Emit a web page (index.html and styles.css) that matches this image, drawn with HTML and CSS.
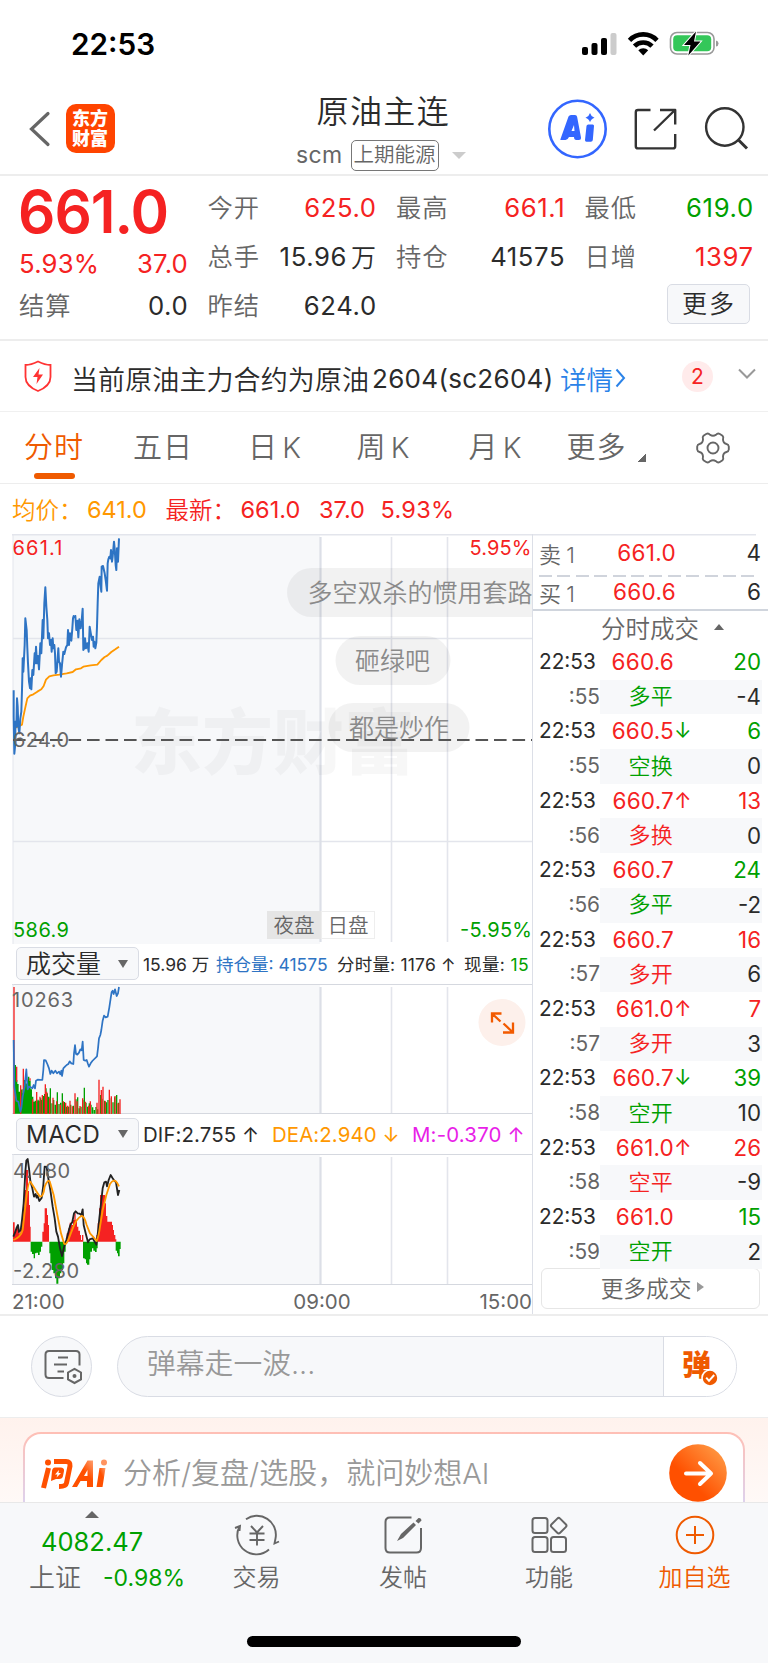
FILE: index.html
```
<!DOCTYPE html>
<html lang="zh-CN">
<head>
<meta charset="utf-8">
<title>原油主连</title>
<link rel="stylesheet" href="styles.css">
</head>
<body>
<div class="status">
  <span class="clock">22:53</span>
  <svg class="status-icons" width="140" height="26" viewBox="0 0 140 26">
    <rect x="2" y="16" width="6" height="8" rx="2"/><rect x="11.500" y="12" width="6" height="12" rx="2"/><rect x="21" y="7" width="6" height="17" rx="2"/><rect x="30.500" y="2" width="6" height="22" rx="2" fill="#ccc"/>
    <g fill="none" stroke="#000" stroke-width="4.600"><path d="M49.500 9.300a19 19 0 0 1 27.500 0"/><path d="M54.500 15.200a12.200 12.200 0 0 1 17.500 0"/></g>
    <path d="M58.300 19.300a7 7 0 0 1 9.900 0L63.250 24.500z"/>
    <rect x="90.500" y="1.500" width="43.500" height="21.500" rx="6.500" fill="none" stroke="#999" stroke-width="1.600"/>
    <rect x="93.200" y="4.200" width="38" height="16" rx="4" fill="#34c759"/><path d="M136 9.500q2.500.500 2.500 3t-2.500 3z" fill="#999"/>
    <path d="M116 .500L104 14h6.500l-2.200 10.500L120.500 10.500H114z" stroke="#fff" stroke-width="2" paint-order="stroke"/>
  </svg>
</div>
<header class="topbar">
  <svg class="back" width="24" height="40" viewBox="0 0 24 40"><path d="M20 4.500L3.500 20 20 35.500" fill="none" stroke="#666" stroke-width="3.200" stroke-linecap="round"/></svg>
  <div class="brand"><span>东方</span><span>财富</span></div>
  <div class="title">
    <h1>原油主连</h1>
    <div class="sub"><span class="scm">scm</span><span class="exch">上期能源</span><i class="tri-down"></i></div>
  </div>
  <svg class="tools" width="212" height="60" viewBox="546 99 212 60" fill="none" stroke="#333" stroke-width="2.400">
    <circle cx="577.500" cy="129" r="28.200" stroke="#3366ff" stroke-width="2.600"/>
    <path d="M560.500 139l8-22.500q.800-1.500 2.500-1.500h4q1.800 0 2.100 1.800l3.900 20.700q.200 2.500-2.200 2.500h-2.500q-2.300 0-2.300-3h-5q-1.300 3-3.500 3h-3.500q-2.500 0-1.500-1zM571.500 131h3l-.500-6z" fill="#3366ff" fill-rule="evenodd" stroke="none"/>
    <path d="M586.500 126q.200-1.500 1.700-1.500h4.500q1.500 0 1.300 1.500l-1.200 14q-.200 1.800-2 1.800h-4.300q-1.700 0-1.500-1.800z" fill="#3366ff" stroke="none"/>
    <path d="M590 113q1 3.600 4.500 4.800-3.500 1-4.500 4.500-1-3.500-4.500-4.500 3.500-1.200 4.500-4.800z" fill="#3366ff" stroke="none"/>
    <path d="M650.500 110H638q-2.200 0-2.200 2.200v34q0 2.200 2.200 2.200h35q2.200 0 2.200-2.200V134M660 110h15.200v14.500M675 110l-21 20.500" stroke-linejoin="round"/>
    <circle cx="724.800" cy="127" r="18.700"/><path d="M738 139.500l9 9" stroke-width="3"/>
  </svg>
</header>
<section class="quote">
  <div class="price-box"><div class="last">661.0</div><div class="pair red"><span>5.93%</span><span>37.0</span></div><div class="pair third"><label>结算</label><b>0.0</b></div></div>
  <div class="col"><div class="pair"><label>今开</label><b class="red">625.0</b></div><div class="pair"><label>总手</label><b>15.96<small>万</small></b></div><div class="pair"><label>昨结</label><b>624.0</b></div></div>
  <div class="col"><div class="pair"><label>最高</label><b class="red">661.1</b></div><div class="pair"><label>持仓</label><b>41575</b></div></div>
  <div class="col"><div class="pair"><label>最低</label><b class="green">619.0</b></div><div class="pair"><label>日增</label><b class="red">1397</b></div><div class="more-wrap"><span class="more">更多</span></div></div>
</section>
<section class="notice">
  <svg width="28" height="32" viewBox="0 0 28 32"><path d="M14 1.500Q21 5 26.500 5V17q0 9-12.500 14Q1.500 26 1.500 17V5Q7 5 14 1.500z" fill="none" stroke="#f33" stroke-width="1.800"/><path d="M15.500 8L9 17h4.500l-1 7L19 14.500h-4.500z" fill="#f33"/></svg>
  <p><span class="n1">当前原油主力合约为原油</span><span class="n2">2604(sc2604)</span><span class="n3">详情</span></p>
  <svg class="n-arrow" width="11" height="20" viewBox="0 0 11 20"><path d="M1.500 1.500L9 10 1.500 18.500" fill="none" stroke="#2b83e8" stroke-width="2"/></svg>
  <span class="count">2</span>
  <svg class="fold" width="18" height="12" viewBox="0 0 18 12"><path d="M1 1.500l8 8 8-8" fill="none" stroke="#999" stroke-width="2"/></svg>
</section>
<nav class="tabs">
  <span class="tab t1 active">分时</span><span class="tab t2">五日</span><span class="tab t3">日 K</span><span class="tab t4">周 K</span><span class="tab t5">月 K</span><span class="tab t6">更多</span><i class="corner"></i>
  <svg width="36" height="36" viewBox="-18 -18 36 36" fill="none" stroke="#666" stroke-width="1.900"><path d="M-6.500-14.200Q-4.500-15-3-13.200Q0-11.200 3-13.200Q4.500-15 6.500-14.200L9.500-12.200Q10.800-11 10-8.800Q10-5 13.500-4Q15.600-3.500 15.800-1.500V1.500Q15.600 3.500 13.500 4Q10 5 10 8.800Q10.800 11 9.500 12.200L6.500 14.200Q4.500 15 3 13.200Q0 11.200-3 13.200Q-4.500 15-6.500 14.200L-9.500 12.200Q-10.800 11-10 8.800Q-10 5-13.500 4Q-15.600 3.500-15.800 1.500V-1.500Q-15.600-3.500-13.500-4Q-10-5-10-8.800Q-10.800-11-9.500-12.200Z"/><circle r="5.500"/></svg>
</nav>
<div class="legend"><span class="orange lg1">均价：</span><span class="orange lg2">641.0</span><span class="red lg3">最新：</span><span class="red lg4">661.0</span><span class="red lg5">37.0</span><span class="red lg6">5.93%</span></div>
<main class="market">
  <div class="charts">
    <svg class="chart" width="521" height="410" viewBox="0 0 521 410">
      <rect x="1" y="1" width="307" height="409" fill="#f7f8fa"/>
      <g fill="none" stroke="#e3e5ec"><path d="M0 .750H521" stroke-width="1.500"/><path d="M1 0V410" /><path d="M1 104.500H521M1 307.500H521" stroke-width="1.600"/><path d="M379.500 3V408M435.500 3V408" stroke-width="1.600"/><path d="M308.500 3V408" stroke-width="2.200" stroke="#dcdfe7"/></g>
      <text class="watermark" x="119" y="234" textLength="284">东方财富</text>
      <g fill="rgb(0 0 0 / 5%)"><rect x="275" y="34" width="290" height="49" rx="24.500"/><rect x="323.500" y="102" width="115" height="49" rx="24.500"/><rect x="316.500" y="169" width="141" height="49" rx="24.500"/></g>
      <g class="bullet"><text x="295.500" y="68" textLength="225">多空双杀的惯用套路</text><text x="343" y="136" textLength="75">砸绿吧</text><text x="337" y="203" textLength="100">都是炒作</text></g>
      <g transform="translate(-12 -4) scale(.33333)" fill="none" stroke-linejoin="round">
        <path d="M41 595L54 590 66 584 70 560 76 532 82 505 90 497 100 493 112 485 124 478 131 468 138 449 148 439 160 436 178 434 200 430 218 426 228 418 243 415 250 410 272 406 292 404 304 390 314 381 322 377 334 366 346 358 357 350" stroke="#ff9800" stroke-width="5.500"/>
        <path d="M41 481L41 560 43 671 46 640 46 575 49 590 51 505 53 530 55 590 58 610 61 565 64 545 66 480 67 440 68 385 70 425 72 385 74 345 76 265 80 300 82 355 84 400 87 455 90 474 92 445 94 478 97 420 100 435 104 370 106 400 108 350 111 400 114 378 117 418 121 340 124 370 128 270 130 325 133 220 136 172 139 230 142 270 144 325 147 310 150 345 153 330 155 365 158 325 160 355 163 345 165 370 167 430 170 425 173 385 175 355 177 395 180 400 183 440 186 405 190 365 193 372 198 352 202 345 204 300 207 345 210 310 214 332 217 295 219 265 221 258 224 262 226 258 229 300 232 272 235 322 238 268 242 295 245 272 248 236 250 360 253 355 255 325 258 355 262 340 266 365 269 290 272 308 276 330 279 320 281 350 283 335 286 355 289 338 291 290 293 220 295 160 299 140 301 162 304 185 305 110 309 108 314 130 317 150 321 182 323 100 325 88 328 80 331 85 333 60 336 95 338 80 342 35 344 55 347 105 349 120 351 55 354 95 357 25" stroke="#2e74c4" stroke-width="6"/>
      </g>
      <path d="M1 206H521" stroke="#555" stroke-width="2" stroke-dasharray="12.600 5.900"/>
      <g class="ax"><text class="r" x="0.500" y="21" textLength="50">661.1</text><text class="r" x="457.500" y="21" textLength="62">5.95%</text><text class="k" x="1" y="212.500" textLength="56">624.0</text><text class="g" x="1" y="403" textLength="56">586.9</text><text class="g" x="448" y="403" textLength="72">-5.95%</text></g>
      <rect x="255" y="377" width="54" height="28" fill="#e5e5e5"/><rect x="309.500" y="377.500" width="53" height="27" fill="#fff" stroke="#eee"/>
      <g class="session"><text x="261.500" y="399">夜盘</text><text x="315.500" y="399">日盘</text></g>
    </svg>
    <div class="ind"><span class="drop d1">成交量<i></i></span><span class="i1">15.96 万</span><span class="i2 blue">持仓量: 41575</span><span class="i3">分时量: 1176 ↑</span><span class="i4">现量: <em class="green">15</em></span></div>
    <svg class="chart" width="521" height="130" viewBox="0 0 521 130">
      <rect x="1" width="307" y="1" height="129" fill="#f7f8fa"/>
      <g fill="none" stroke="#e3e5ec"><path d="M0 .500H521M0 129.500H521" stroke="#d5d8df"/><path d="M1 0V130"/><path d="M379.500 3V129M435.500 3V129" stroke-width="1.600"/><path d="M308.500 3V129" stroke-width="2.200" stroke="#dcdfe7"/></g>
      <g transform="translate(-12 -54) scale(.33333)" fill="none" stroke-width="4">
        <path stroke="#00a000" d="M46 551V405M50 551V450M54 551V462M58 551V485M62 551V480M66 551V478M70 551V490M74 551V450M78 551V460M82 551V462M86 551V440M90 551V452M94 551V478M98 551V500M102 551V515M106 551V512M110 551V514M114 551V509M118 551V512M122 551V505M126 551V510M130 551V498M134 551V492M138 551V475M142 551V490M146 551V500M151 551V475M156 551V520M161 551V510M166 551V524M172 551V487M177 551V522M182 551V518M187 551V490M193 551V516M200 551V530M206 551V530M212 551V524M220 551V527M228 551V508M233 551V502M238 551V535M243 551V530M248 551V510M253 551V473M258 551V518M263 551V530M268 551V520M273 551V524M278 551V532M283 551V540M288 551V531M293 551V538M302 551V495M306 551V506M314 551V512M319 551V517M324 551V510M334 551V505M339 551V517M344 551V502M350 551V495M356 551V518"/>
        <path stroke="#f52222" d="M42 553V171M50 455V410M62 553V466M70 490V416M90 452V445M98 553V508M110 553V486M120 553V500M127 553V495M136 553V463M140 553V485M149 553V505M159 553V503M170 553V514M181 553V524M190 553V514M197 553V518M203 553V527M210 553V512M217 553V529M225 553V490M231 553V514M240 553V528M248 553V505M256 553V515M266 553V527M271 553V514M291 553V518M297 553V449M304 553V480M309 553V470M316 553V514M328 553V479M334 553V499M345 553V498M354 553V520M360 553V508"/>
        <path stroke="#2e74c4" stroke-width="5.200" stroke-linejoin="round" d="M41 330L43 470 49 512 55 515 61 545 64 535 68 500 74 470 79 418 83 478 87 470 93 472 97 475 101 465 105 475 108 452 113 449 127 450 130 420 132 390 137 391 142 402 147 415 151 432 155 422 160 430 166 422 171 430 177 425 181 433 184 422 186 438 190 415 195 410 200 405 205 402 209 394 214 400 220 402 222 370 225 345 228 372 232 374 237 368 241 358 245 361 248 335 251 390 256 392 260 390 264 402 267 410 272 400 277 393 283 387 291 379 294 355 297 325 301 315 304 300 308 272 312 257 317 262 323 260 328 232 332 205 335 186 338 182 341 192 345 178 350 198 354 190 357 171"/>
      </g>
      <g class="ax"><text class="k" x="0" y="23" textLength="61">10263</text></g>
      <circle cx="490" cy="38.500" r="23.500" fill="#fdf0eb"/><path d="M480 38.500v-9h9.500M480.500 30l8 7.500M491 48.500h10V38.500M500.500 48l-9-8.500" fill="none" stroke="#f25a00" stroke-width="2.300"/>
    </svg>
    <div class="ind macd"><span class="drop d2">MACD<i></i></span><span class="m1">DIF:2.755 ↑</span><span class="m2 orange">DEA:2.940 ↓</span><span class="m3">M:-0.370 ↑</span></div>
    <svg class="chart" width="521" height="131" viewBox="0 0 521 131">
      <rect x="1" y="1" width="307" height="130" fill="#f7f8fa"/>
      <g fill="none" stroke="#e3e5ec"><path d="M0 .500H521M0 130.500H521" stroke="#d5d8df"/><path d="M1 0V130"/><path d="M379.500 3V130M435.500 3V130" stroke-width="1.600"/><path d="M308.500 3V130" stroke-width="2.200" stroke="#dcdfe7"/></g>
      <g transform="translate(-12 -224) scale(.33333)" stroke-linejoin="round">
        <path fill="#f52222" d="M39 935V877H44V905H48V895H53V885H57V910H61V895H65V870H69V830H73V780H78V720H84V783H87V825H90V890H92V935zM127 935V905H131V880H134V835H141V855H144V885H147V935zM200 935V910H205V895H209V878H214V885H219V870H223V850H227V870H231V890H235V902H240V915H243V930H246V915H250V935zM289 935V915H293V880H297V835H300V795H315V820H318V858H322V875H336V885H339V900H342V915H346V928H349V935z"/>
        <path fill="#00a000" d="M92 935V965H96V972H101V985H105V970H109V968H114V975H119V965H123V950H127V935zM148 935V970H151V1000H155V1020H160V1030H165V1045H169V1061H175V1045H180V1030H184V1020H189V1000H193V965H197V935zM249 935V985H254V988H258V1000H261V1004H268V988H271V965H276V955H280V962H285V966H290V955H293V935zM347 935V962H351V970H354V979H359V957H362V935z"/>
        <g fill="none" stroke-width="5.500"><path stroke="#222" d="M40 920L45 908 50 893 54 885 57 906 62 900 66 870 71 820 76 725 79 692 83 687 87 715 91 753 97 775 102 800 107 792 110 803 113 797 118 813 125 804 130 765 134 710 140 711 145 745 151 780 158 830 164 865 169 905 174 920 180 955 186 978 192 952 199 930 205 907 211 885 217 876 222 850 227 844 233 850 239 851 244 855 248 838 251 885 257 910 264 937 269 928 278 925 289 944 294 905 298 865 303 820 308 775 313 757 318 755 321 769 326 750 332 735 337 743 343 752 348 757 354 795 358 780"/><path stroke="#ff9800" d="M40 930Q62 922 68 900L77 820Q84 755 91 755Q101 770 108 782L119 799Q130 803 134 770Q143 748 149 754L161 795 172 855 183 910 192 940Q198 948 206 927L219 893Q230 865 244 858Q253 857 260 885L270 910Q280 920 290 933Q296 920 300 890L308 840 319 795 330 762Q342 744 351 758L357 769"/></g>
      </g>
      <g class="ax"><text class="k" x="1" y="23.500" textLength="57">4.480</text><text class="k" x="1" y="123.500" textLength="66">-2.280</text></g>
    </svg>
    <div class="times"><span>21:00</span><span>09:00</span><span>15:00</span></div>
  </div>
  <aside class="tape">
    <div class="book ask"><span>卖 1</span><b>661.0</b><em>4</em></div>
    <div class="book bid"><span>买 1</span><b>660.6</b><em>6</em></div>
    <div class="deal-title">分时成交<i class="tri-up"></i></div>
    <div class="deals">
      <div class="deal"><span>22:53</span><b>660.6</b><i></i><em class="green">20</em></div>
      <div class="deal s"><span>:55</span><b class="green">多平</b><em>-4</em></div>
      <div class="deal"><span>22:53</span><b>660.5</b><i class="green">↓</i><em class="green">6</em></div>
      <div class="deal s"><span>:55</span><b class="green">空换</b><em>0</em></div>
      <div class="deal"><span>22:53</span><b>660.7</b><i class="red">↑</i><em class="red">13</em></div>
      <div class="deal s"><span>:56</span><b class="red">多换</b><em>0</em></div>
      <div class="deal"><span>22:53</span><b>660.7</b><i></i><em class="green">24</em></div>
      <div class="deal s"><span>:56</span><b class="green">多平</b><em>-2</em></div>
      <div class="deal"><span>22:53</span><b>660.7</b><i></i><em class="red">16</em></div>
      <div class="deal s"><span>:57</span><b class="red">多开</b><em>6</em></div>
      <div class="deal"><span>22:53</span><b>661.0</b><i class="red">↑</i><em class="red">7</em></div>
      <div class="deal s"><span>:57</span><b class="red">多开</b><em>3</em></div>
      <div class="deal"><span>22:53</span><b>660.7</b><i class="green">↓</i><em class="green">39</em></div>
      <div class="deal s"><span>:58</span><b class="green">空开</b><em>10</em></div>
      <div class="deal"><span>22:53</span><b>661.0</b><i class="red">↑</i><em class="red">26</em></div>
      <div class="deal s"><span>:58</span><b class="red">空平</b><em>-9</em></div>
      <div class="deal"><span>22:53</span><b>661.0</b><i></i><em class="green">15</em></div>
      <div class="deal s"><span>:59</span><b class="green">空开</b><em>2</em></div>
    </div>
    <div class="more-deals">更多成交<i></i></div>
  </aside>
</main>
<section class="danmu">
  <span class="round"><svg width="40" height="36" viewBox="0 0 40 36" fill="none" stroke="#666" stroke-width="2"><path d="M21.500 29H7Q3.500 29 3.500 25.500V5.500Q3.500 2 7 2H34Q37.500 2 37.500 5.500V16.500M16 8.500h10M12 15.500h13M15.500 22.500h6.500"/><path d="M32.500 19.800L39 23.500v7L32.500 34l-6.500-3.500v-7z"/><circle cx="32.500" cy="27" r="2" fill="#666" stroke="none"/></svg></span>
  <div class="field"><span class="ph">弹幕走一波...</span><span class="send">弹<svg width="18" height="18" viewBox="-9 -9 18 18"><circle r="8" fill="#ef5a00" stroke="#fff" stroke-width="1.600"/><path d="M-3.800-.300L-1 2.800 4.200-3" fill="none" stroke="#fff" stroke-width="2"/></svg></span></div>
</section>
<section class="ask-ai">
  <div class="ai-card">
    <svg class="ai-logo" width="68" height="32" viewBox="40 1457 68 32"><defs><linearGradient id="lg" x1="0" x2="1" y1="1" y2="0"><stop offset=".6" stop-color="#ff5000"/><stop offset="1" stop-color="#ffa070"/></linearGradient></defs>
      <g fill="none" stroke="#ff5000" stroke-width="5" stroke-linejoin="round"><path d="M48.500 1467L43.500 1487"/><path d="M54 1460.500H66Q70.500 1460.500 70 1465L66.500 1482Q66 1485.500 59 1485.500"/></g><path d="M55 1466.500H60.500Q64.500 1466.500 64 1470L63 1475Q62.500 1478 59 1478H56L51 1480 52 1470Q52.500 1466.500 55 1466.500zM59 1469L55 1473.500H57.500L56.500 1476.500 61 1472H58.500z" fill="#ff5000" fill-rule="evenodd"/><circle cx="48" cy="1461.500" r="3" fill="#ff5000"/>
      <path d="M72 1486L87.500 1459.500H93V1486H87V1480H80.500L77 1486zM84 1475H87.500V1469z" fill="url(#lg)" fill-rule="evenodd"/><path d="M99.500 1467H105.500L102.500 1486H96.500z" fill="url(#lg)"/><circle cx="104" cy="1461.500" r="3" fill="#ff9460"/></svg>
    <span class="ai-text">分析/复盘/选股，就问妙想AI</span>
    <svg class="go" width="58" height="58" viewBox="0 0 58 58"><defs><linearGradient id="go" x1=".2" y1=".75" x2=".85" y2=".1"><stop offset=".2" stop-color="#ff5000"/><stop offset="1" stop-color="#ff9540"/></linearGradient></defs><circle cx="29" cy="29" r="28.800" fill="url(#go)"/><path d="M17 29.500H42M31 19L42 29.500 31 40" fill="none" stroke="#fff" stroke-width="4" stroke-linecap="round" stroke-linejoin="round"/></svg>
  </div>
</section>
<footer class="nav">
  <div class="index"><i class="tri-up"></i><div class="idx-val green">4082.47</div><div class="idx-row"><span>上证</span><span class="green pct">-0.98%</span></div></div>
  <div class="item"><svg width="46" height="42" viewBox="-23 -21 46 42" fill="none" stroke="#666" stroke-width="1.900"><path d="M-11-15.800A19 19 0 0 1 18.500 3.500L17.500 8.500 22 6.500M12 14.500A19 19 0 0 1-17.500-8.500M-22-7L-17-9-17.500-4M-6-9L0-2.500 6-9M0-2.500V10.500M-7.500-1.500H7.500M-7.500 5H7.500"/></svg><span>交易</span></div>
  <div class="item"><svg width="42" height="42" viewBox="-21 -21 42 42" fill="none" stroke="#666" stroke-width="2"><path d="M8.500-17.500H-13Q-17.500-17.500-17.500-13V13Q-17.500 17.500-13 17.500H13.500Q18 17.500 18 13V-7"/><path d="M-6 6L-2-1 10.500-12.500 13-10 0 3zM12.500-14L15.500-17Q18.500-17.500 18.500-14.500L15.500-11.500z" fill="#666" stroke="none"/></svg><span>发帖</span></div>
  <div class="item"><svg width="42" height="42" viewBox="-21 -21 42 42" fill="none" stroke="#666" stroke-width="2"><rect x="-16.500" y="-17" width="15" height="15" rx="2.500"/><rect x="-16.500" y="2" width="15" height="15" rx="2.500"/><rect x="2" y="2" width="15" height="15" rx="2.500"/><rect x="3.700" y="-15.300" width="12" height="12" rx="2" transform="rotate(45 9.700 -9.300)"/></svg><span>功能</span></div>
  <div class="item add"><svg width="42" height="42" viewBox="-21 -21 42 42" fill="none" stroke="#ef5a00" stroke-width="2"><circle r="18.300"/><path d="M-9 0H9M0-9V9"/></svg><span>加自选</span></div>
  <div class="home"></div>
</footer>
</body>
</html>
```
FILE: styles.css
```
* { box-sizing: border-box; }
body { margin: 0; width: 768px; height: 1663px; overflow: hidden; background: #fff; color: #2b2b2b; font-family: Inter, "Noto Sans CJK SC", sans-serif; font-weight: 370; }
svg { display: block; flex: none; }
i, em { font-style: normal; }
b { font-weight: 370; }
.red { color: #f52222; }
.green { color: #00a000; }
.orange { color: #ff9800; }
.blue { color: #2e74c4; }

.status { height: 88px; display: flex; justify-content: space-between; padding: 26px 48px 0 71px; }
.clock { font-size: 29.700px; line-height: 36px; font-weight: 600; color: #000; }
.status-icons { margin-top: 5px; }

.topbar { height: 88px; display: flex; border-bottom: 2px solid #ededed; }
.back { margin: 21px 0 0 28px; }
.brand { width: 49px; height: 49px; margin: 16px 0 0 13.500px; border-radius: 10px; background: #ff4400; color: #fff; display: flex; flex-direction: column; align-items: center; padding-top: 5px; font-size: 18px; line-height: 20px; font-weight: 800; }
.title { width: 431.500px; display: flex; flex-direction: column; align-items: flex-start; }
h1 { margin: 4px 0 0 202px; font-size: 32px; line-height: 40px; font-weight: 350; letter-spacing: 1.4px; }
.sub { display: flex; align-items: center; margin: 8px 0 0 181.500px; height: 31px; color: #666; }
.scm { width: 54.500px; font-size: 23px; letter-spacing: .4px; margin-top: -2px; }
.exch { width: 88px; height: 31px; border: 1.500px solid #777; border-radius: 5px; font-size: 20.500px; line-height: 28px; text-align: center; font-weight: 350; white-space: nowrap; }
.tri-down { margin-left: 13px; border: 7px solid transparent; border-top-color: #ccc; border-bottom: 0; }
.tools { margin: 11px 0 0; }

.quote { height: 165px; display: flex; gap: 20.500px; padding: 8px 15px 0 19px; border-bottom: 2px solid #ededed; }
.price-box, .col { width: 168px; }
.last { height: 49px; font-size: 58.500px; line-height: 55px; font-weight: 600; color: #f52222; letter-spacing: -1px; margin-left: -1px; }
.pair { height: 49px; display: flex; justify-content: space-between; align-items: center; font-size: 25.700px; white-space: nowrap; }
.pair b { letter-spacing: .6px; margin: -2px -1.200px 0 0; display: flex; align-items: center; }
.price-box .pair.red { height: 49px; padding-top: 12px; margin-right: -1px; letter-spacing: .2px; }
.pair label { color: #666; font-size: 25.300px; letter-spacing: 1px; font-weight: 350; margin-top: -5px; }
.pair small { font-size: 25px; font-weight: 350; margin: -2px 0 0 4px; }
.more-wrap { display: flex; justify-content: flex-end; padding: 2px 3px 0 0; }
.more { width: 83px; height: 40px; border: 1.500px solid #d9dce4; border-radius: 5px; background: #f7f8fa; font-size: 25px; line-height: 39px; text-align: center; letter-spacing: 2px; padding-left: 2px; font-weight: 350; }

.notice { height: 71px; display: flex; align-items: center; padding: 0 12px 0 24px; border-bottom: 1px solid #f0f0f0; }
.notice p { margin: 4px 0 0 19px; font-size: 27px; display: flex; white-space: nowrap; }
.n1 { width: 301px; letter-spacing: .1px; font-weight: 350; }
.n2 { width: 188px; font-size: 26px; letter-spacing: .3px; align-self: center; }
.n3 { color: #2b83e8; font-size: 26.500px; width: 55px; font-weight: 350; }
.n-arrow { margin: 4px 0 0; }
.count { width: 31px; height: 31px; border-radius: 50%; background: #ffebeb; color: #f52222; font-size: 21px; line-height: 31px; text-align: center; margin-left: 56px; }
.fold { margin: -4px 0 0 auto; }

.tabs { height: 72px; display: flex; border-bottom: 1px solid #ededed; color: #666; font-size: 29px; line-height: 72px; white-space: nowrap; padding-left: 24px; font-weight: 350; }
.tab { letter-spacing: 1px; }
.t1 { width: 109px; position: relative; }
.t2 { width: 115px; }
.t3, .t4, .t5 { letter-spacing: 0; word-spacing: -3px; }
.t3 { width: 108.500px; }
.t4 { width: 112px; }
.t5 { width: 98px; }
.t6 { width: 71.500px; }
.active { color: #ef5a00; }
.active::after { content: ""; position: absolute; left: 10px; top: 61px; width: 41px; height: 6px; border-radius: 3px; background: #ef5a00; }
.corner { width: 8px; height: 8px; margin-top: 42px; background: linear-gradient(135deg, transparent 50%, #666 50%); }
.tabs svg { margin: 17.500px 0 0 49px; }

.legend { height: 50px; display: flex; align-items: center; padding: 0 0 0 12px; font-size: 23.500px; white-space: nowrap; }
.lg1, .lg3 { width: 75px; font-weight: 350; }
.lg2, .lg4 { width: 78.500px; }
.lg5 { width: 61.500px; }
.lg6 { letter-spacing: .3px; }

.market { height: 782px; display: grid; grid-template-columns: 521px 235px; padding-left: 12px; border-bottom: 2px solid #ededed; }
.charts { overflow: hidden; border-right: 1px solid #dcdfe7; }
.watermark { font-size: 71px; font-weight: 900; fill: rgb(0 0 0 / 3%); }
.bullet { font-size: 25px; fill: #8a8a8a; font-weight: 350; }
.ax { font-size: 20px; }
.r { fill: #f52222; }
.g { fill: #00a000; }
.k { fill: #666; }
.session { font-size: 20.500px; fill: #666; font-weight: 350; }
.ind { height: 40px; display: flex; align-items: center; padding: 0 0 1px 4px; font-size: 17.500px; white-space: nowrap; }
.drop { width: 123px; height: 33px; border: 1px solid #d9dce4; border-radius: 5px; background: #f7f8fa; display: flex; align-items: center; justify-content: space-between; padding: 0 10px 0 9px; font-size: 25px; margin-right: 4px; }
.d1 { font-weight: 350; line-height: 30px; }
.drop i { border: 5px solid transparent; border-top: 8px solid #666; border-bottom: 0; }
.d2 { font-size: 24px; letter-spacing: .5px; }
.i1 { width: 73px; }
.i2 { width: 121px; }
.i3 { width: 127px; letter-spacing: .2px; }
.i4 { letter-spacing: .4px; }
.macd { font-size: 20.400px; padding-bottom: 0; }
.m1 { width: 129px; letter-spacing: .1px; }
.m2 { width: 140px; letter-spacing: .1px; }
.m3 { color: #e81ee8; letter-spacing: .2px; }
.times { height: 30px; display: flex; justify-content: space-between; align-items: center; font-size: 20.500px; color: #666; padding: 2px 0 0 0; }
.times span:nth-child(2) { margin-left: 100px; }

.tape { width: 235px; }
.book { display: flex; align-items: center; height: 41px; font-size: 22.500px; padding: 0 7px 4px 6px; width: 235px; background: linear-gradient(#e3e5ec, #e3e5ec) 0 0 / 223px 1.500px no-repeat; }
.book span { width: 74px; color: #666; font-size: 22px; font-weight: 350; word-spacing: -1px; }
.book b { width: 63px; color: #f52222; text-align: right; letter-spacing: .3px; }
.book em { margin-left: auto; }
.bid { height: 36px; padding-bottom: 1px; background: repeating-linear-gradient(90deg, #d0d4dc 0 13px, transparent 13px 18.400px) 6px 0 / 216px 2px no-repeat; border-bottom: 2px solid #d0d5dd; }
.deal-title { height: 34px; display: flex; align-items: center; justify-content: center; font-size: 24.500px; color: #666; padding: 0 0 2px 24px; font-weight: 350; }
.tri-up { border: 5px solid transparent; border-bottom: 6px solid #666; border-top: 0; margin-left: 15px; }
.deals { display: grid; grid-auto-rows: 34.700px; }
.deal { display: grid; grid-template-columns: 60px 75px 20px 1fr; align-items: center; padding: 0 7px 1.500px 6px; font-size: 20.800px; }
.deal b { text-align: right; color: #f52222; font-size: 22.500px; letter-spacing: .2px; }
.deal b.green { color: #00a000; }
.deal em { text-align: right; font-size: 22.300px; }
.deal i { font-size: 21px; }
.deal.s { grid-template-columns: 61px 73px 1fr; background: linear-gradient(#f7f8fa, #f7f8fa) 67px 0 / 162px 100% no-repeat; }
.deal.s span { color: #666; text-align: right; }
.deal.s b { font-size: 22px; font-weight: 350; line-height: 30px; }
.more-deals { width: 219px; height: 41px; margin: -1px 0 0 8px; border: 1px solid #e6e6e6; border-radius: 6px; background: #fff; color: #666; font-size: 22.700px; font-weight: 350; display: flex; align-items: center; justify-content: center; padding: 0 0 3px 4px; }
.more-deals i { border: 5px solid transparent; border-left: 7px solid #999; border-right: 0; margin-left: 6px; }

.danmu { height: 102px; display: flex; padding: 20px 31px 0; gap: 25px; border-bottom: 1px solid #ededed; }
.round { width: 61px; height: 61px; border: 1px solid #d9dce4; border-radius: 50%; background: #f7f8fa; display: flex; align-items: center; justify-content: center; }
.field { flex: 1; height: 61px; border: 1px solid #d9dce4; border-radius: 31px; background: #f7f8fa; display: flex; overflow: hidden; }
.ph { flex: 1; padding-left: 29px; font-size: 28.800px; line-height: 54px; color: #999; font-weight: 350; }
.send { width: 73px; border-left: 1.500px solid #d9dce4; background: #fff; color: #ef5a00; font-size: 29px; font-weight: 900; line-height: 57px; padding-left: 18px; display: flex; }
.send svg { margin: 32px 0 0 -10px; }

.ask-ai { height: 84px; background: linear-gradient(#fff2ed, #fff9f7); overflow: hidden; padding: 14px 23px 0; }
.ai-card { height: 90px; border: 2px solid transparent; border-radius: 18px; background: linear-gradient(#fff, #fff) padding-box, linear-gradient(#ffbfb5, #ddd2ee 80%) border-box; display: flex; padding: 0 16px 0 15px; }
.ai-logo { margin-top: 24px; }
.ai-text { margin: 16px 0 0 15px; font-size: 29px; line-height: 48px; color: #999; flex: 1; white-space: nowrap; font-weight: 350; }
.go { margin-top: 10px; }

.nav { height: 161px; background: #f7f8fa; border-top: 1px solid #e8e8e8; display: grid; grid-template-columns: 183px 147px 146px 146px 145px; color: #666; position: relative; }
.index .tri-up { display: block; width: 14px; margin: 8px 0 0 85px; border-width: 0 7px 7px; }
.idx-val { font-size: 25.500px; line-height: 32px; margin: 8px 0 0 41px; }
.idx-row { display: flex; align-items: center; margin: 2px 0 0 29px; font-size: 26px; line-height: 36px; white-space: nowrap; font-weight: 350; }
.pct { font-size: 23px; margin-left: 22px; font-weight: 370; }
.item { display: flex; flex-direction: column; align-items: center; padding-top: 11px; font-size: 24px; line-height: 36px; font-weight: 350; }
.item span { margin-top: 4px; }
.add { color: #ef5a00; }
.home { position: absolute; left: 247px; top: 133px; width: 274px; height: 11px; border-radius: 6px; background: #000; }
```
